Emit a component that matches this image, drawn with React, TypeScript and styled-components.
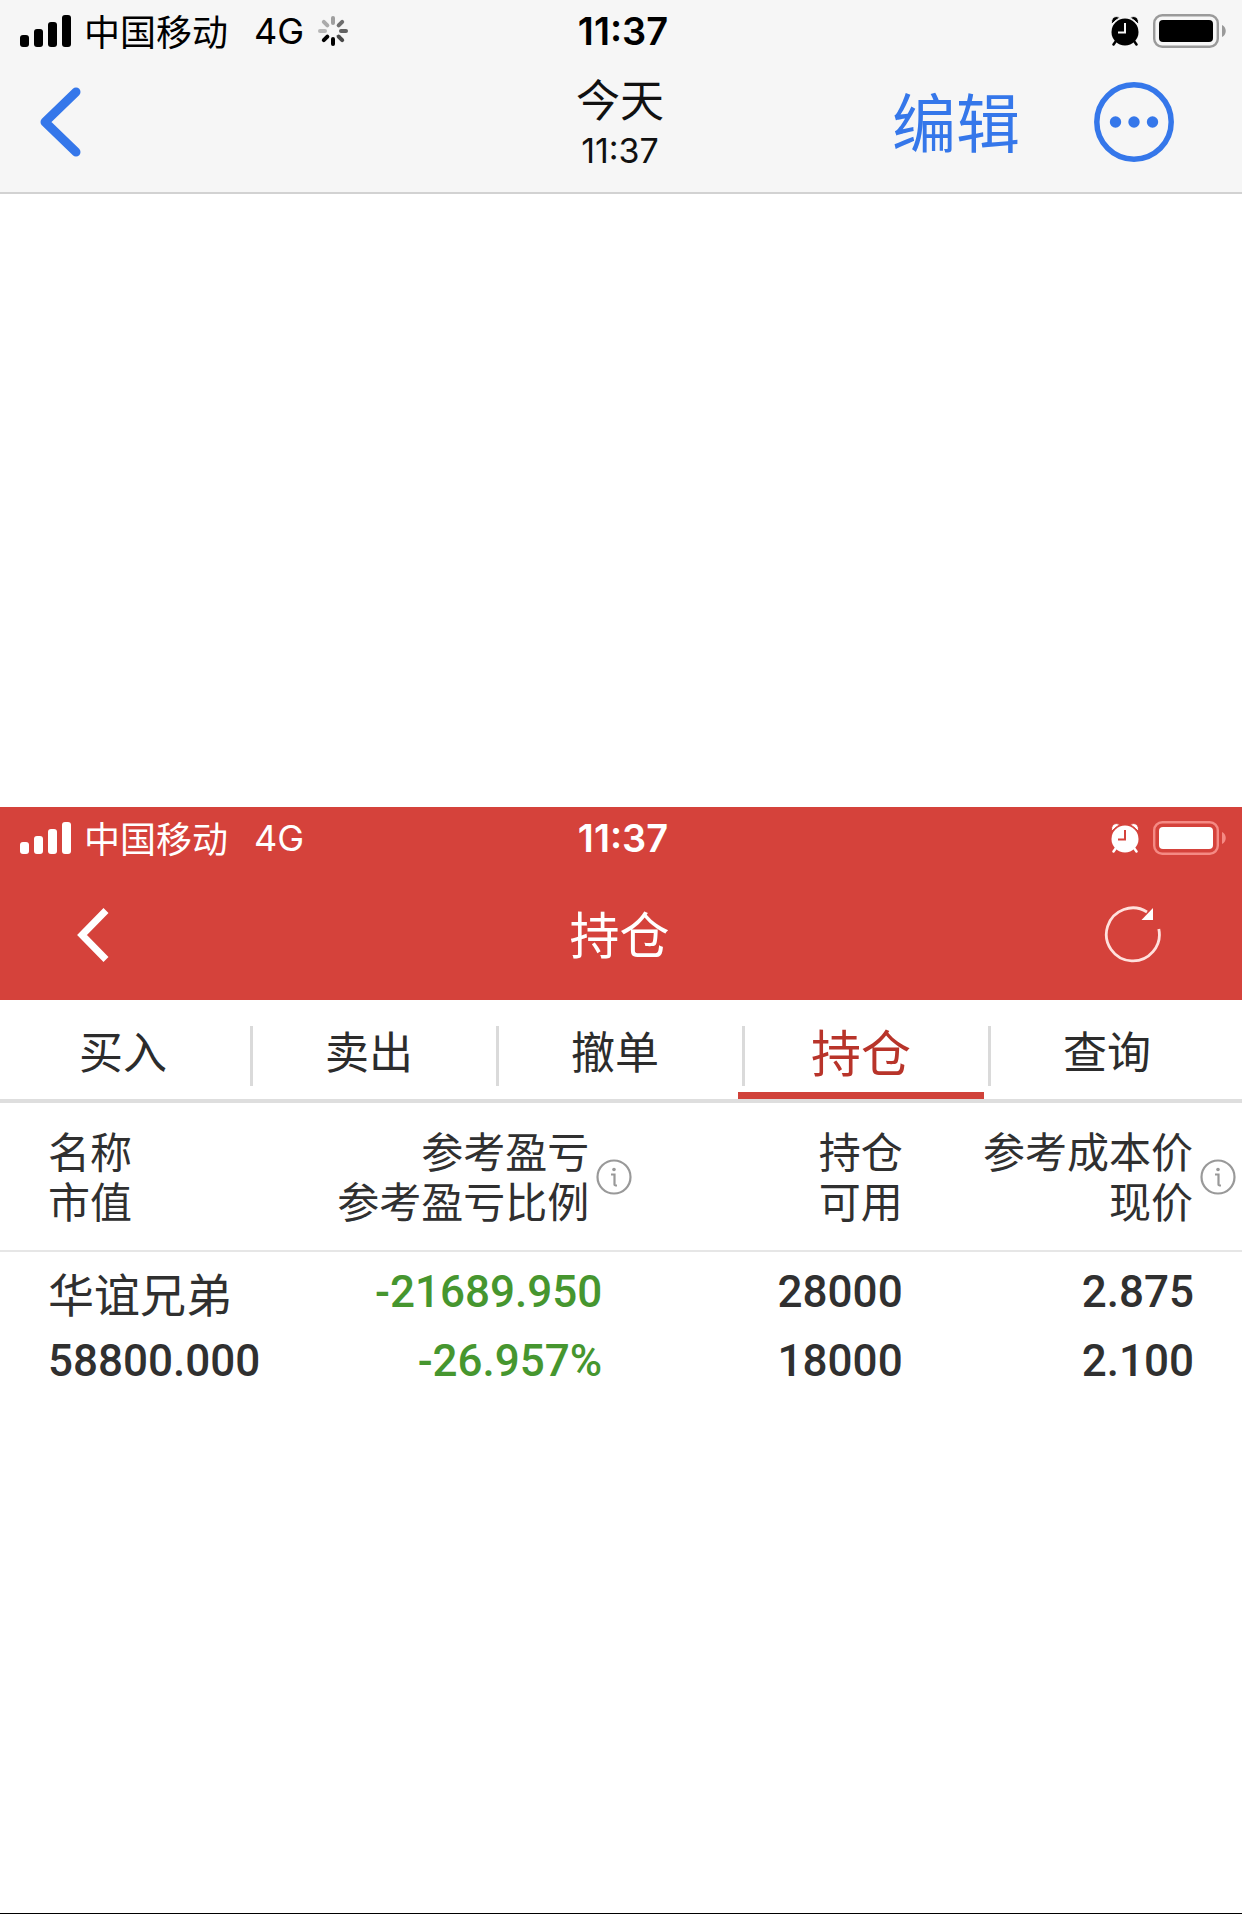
import React from "react";
import styled, { createGlobalStyle } from "styled-components";

const cjk = `"Noto Sans CJK SC", sans-serif`;

const GlobalStyle = createGlobalStyle`
  *, *::before, *::after { box-sizing: border-box; }
  body { margin: 0; background: #fff; font-family: Inter, ${cjk}; }
  button { appearance: none; border: 0; padding: 0; background: none; font: inherit; color: inherit; cursor: pointer; }
  svg { display: block; }
`;

const Page = styled.div`
  display: flex;
  flex-direction: column;
  min-height: 100vh;
  border-bottom: 1px solid #000;
`;

const AlbumHeader = styled.header`
  padding-bottom: 10px;
  background: #f6f6f6;
  border-bottom: 2px solid #d2d2d2;
`;

const StatusRow = styled.div<{ $color: string }>`
  display: grid;
  grid-template-columns: 1fr auto 1fr;
  align-items: center;
  height: 62px;
  padding: 0 16px 0 20px;
  color: ${(p) => p.$color};
  font-size: 36px;
  line-height: 40px;
`;

const Carrier = styled.div`
  display: flex;
  align-items: center;
`;

const CarrierName = styled.span`
  margin-left: 12px;
  padding-bottom: 2px;
  font-family: ${cjk};
`;

const Network = styled.span`
  margin: 0 14px 0 26px;
`;

const Clock = styled.time`
  font-size: 38px;
  font-weight: 600;
`;

const Indicators = styled.div`
  display: flex;
  justify-content: flex-end;
  align-items: center;
  gap: 14px;
`;

const AlbumNav = styled.nav`
  display: grid;
  grid-template-columns: 1fr auto 1fr;
  align-items: center;
  height: 120px;
  padding: 0 68px 0 40px;
`;

const NavButton = styled.button`
  justify-self: start;
  color: #3577ea;
`;

const PhotoDate = styled.div`
  display: flex;
  flex-direction: column;
  align-items: center;
  padding: 8px 0 0 26px;
  color: #111;
  line-height: 52px;
`;

const Day = styled.h1`
  margin: 0;
  font-family: ${cjk};
  font-size: 44px;
  font-weight: 400;
  line-height: 50px;
`;

const Hour = styled.time`
  font-size: 34px;
  line-height: 56px;
`;

const NavActions = styled.div`
  display: flex;
  justify-content: flex-end;
  align-items: center;
  gap: 74px;
`;

const EditButton = styled(NavButton)`
  padding-bottom: 6px;
  font-family: ${cjk};
  font-size: 64px;
  line-height: 80px;
`;

const Photo = styled.main`
  margin-top: 613px;
`;

const BrokerHeader = styled.header`
  background: #d5423b;
  color: #fff;
`;

const BrokerNav = styled.nav`
  display: grid;
  grid-template-columns: 1fr auto 1fr;
  align-items: center;
  height: 131px;
  padding: 0 80px 0 77px;
`;

const BrokerButton = styled.button<{ $end?: boolean }>`
  justify-self: ${(p) => (p.$end ? "end" : "start")};
`;

const BrokerTitle = styled.h2`
  margin: 0;
  padding-bottom: 6px;
  font-family: ${cjk};
  font-size: 50px;
  font-weight: 400;
  line-height: 60px;
`;

const Tabs = styled.div`
  display: grid;
  grid-template-columns: repeat(5, 1fr);
  height: 103px;
  padding-right: 12px;
  border-bottom: 4px solid #dedede;
`;

const Tab = styled.button<{ $active: boolean }>`
  display: flex;
  align-items: center;
  padding-top: 8px;
  border-bottom: 7px solid ${(p) => (p.$active ? "#d0423a" : "transparent")};
  color: ${(p) => (p.$active ? "#b8342a" : "#2c2c2c")};
  font-family: ${cjk};
  font-size: ${(p) => (p.$active ? 50 : 44)}px;
  line-height: 60px;

  &:not(:last-child)::after {
    content: "";
    width: 3px;
    height: 60px;
    margin: 12px -7px 0 4px;
    background: #dadada;
  }
`;

const TabLabel = styled.span`
  flex: 1;
  text-align: center;
`;

const Holdings = styled.table`
  width: 100%;
  border-collapse: collapse;
  table-layout: fixed;
  color: #303030;
`;

const Column = styled.col<{ $width: number }>`
  width: ${(p) => p.$width}%;
`;

const HeadRow = styled.tr`
  border-bottom: 2px solid #e6e6e6;
`;

const HeadCell = styled.th<{ $left?: number; $right?: number }>`
  padding: 22px ${(p) => p.$right ?? 0}px 22px ${(p) => p.$left ?? 0}px;
  font-family: ${cjk};
  font-size: 42px;
  font-weight: 400;
  line-height: 50px;
  white-space: nowrap;
`;

const HeadContent = styled.div<{ $start?: boolean }>`
  display: flex;
  justify-content: ${(p) => (p.$start ? "flex-start" : "flex-end")};
  align-items: center;
  gap: 7px;
  text-align: ${(p) => (p.$start ? "left" : "right")};
`;

const HeadText = styled.div`
  padding-bottom: 3px;
`;

const Line = styled.div``;

const BodyCell = styled.td<{ $left?: number; $right?: number; $loss?: boolean }>`
  padding: 6px ${(p) => p.$right ?? 0}px 0 ${(p) => p.$left ?? 0}px;
  color: ${(p) => (p.$loss ? "#46962f" : "inherit")};
  font-family: Roboto, ${cjk};
  font-size: 44px;
  font-weight: 500;
  line-height: 69px;
  text-align: ${(p) => (p.$left ? "left" : "right")};
  white-space: nowrap;
`;

const StockName = styled.div`
  font-family: ${cjk};
  font-size: 46px;
  font-weight: 400;
`;

const SignalIcon = () => (
  <svg width="52" height="32" viewBox="0 0 52 32" fill="currentColor" aria-hidden="true">
    <rect x="0" y="20" width="9" height="12" rx="3" />
    <rect x="14" y="14" width="9" height="18" rx="3" />
    <rect x="28" y="7" width="9" height="25" rx="3" />
    <rect x="42" y="0" width="9" height="32" rx="3" />
  </svg>
);

const spokes = [0.35, 0.55, 0.6, 0.7, 1, 1, 0.25, 0.3];

const Spinner = () => (
  <svg width="30" height="30" viewBox="-15 -15 30 30" aria-hidden="true">
    {spokes.map((opacity, i) => (
      <line key={i} y1="-13" y2="-8" stroke="#000" strokeWidth="4" strokeLinecap="round"
        opacity={opacity} transform={`rotate(${i * 45})`} />
    ))}
  </svg>
);

const AlarmIcon = ({ hand }: { hand: string }) => (
  <svg width="28" height="30" viewBox="0 0 28 30" aria-hidden="true">
    <circle cx="14" cy="16" r="13.500" fill="currentColor" />
    <g fill="currentColor" stroke={hand} strokeWidth="1">
      <path d="M1 8C-1 3 4-2 9 2C6 3 4 5 1 8Z" />
      <path d="M27 8C29 3 24-2 19 2C22 3 24 5 27 8Z" />
    </g>
    <path d="M5 25L2.500 28.500M23 25L25.500 28.500" stroke="currentColor" strokeWidth="2.500" strokeLinecap="round" />
    <path d="M14 7V16.500H7" fill="none" stroke={hand} strokeWidth="2" />
  </svg>
);

const BatteryIcon = ({ frame }: { frame: string }) => (
  <svg width="73" height="34" viewBox="0 0 73 34" aria-hidden="true">
    <rect x="1.200" y="1.200" width="63.600" height="31.600" rx="8" fill="none" stroke={frame} strokeWidth="2.400" />
    <rect x="6" y="6" width="54" height="22" rx="4" fill="currentColor" />
    <path d="M69 11C74 13 74 21 69 23Z" fill={frame} />
  </svg>
);

const InfoIcon = () => (
  <svg width="36" height="36" viewBox="0 0 36 36" fill="none" stroke="#999" strokeWidth="2.200" aria-hidden="true">
    <circle cx="18" cy="18" r="16.500" />
    <circle cx="18" cy="10.500" r="1.800" fill="#999" stroke="none" />
    <path d="M15 15.500H18.500V25.500Q18.500 26.500 21 26.500" />
  </svg>
);

type StatusProps = { color: string; hand: string; frame: string; busy?: boolean };

const StatusBar = ({ color, hand, frame, busy }: StatusProps) => (
  <StatusRow $color={color}>
    <Carrier>
      <SignalIcon />
      <CarrierName>中国移动</CarrierName>
      <Network>4G</Network>
      {busy && <Spinner />}
    </Carrier>
    <Clock>11:37</Clock>
    <Indicators>
      <AlarmIcon hand={hand} />
      <BatteryIcon frame={frame} />
    </Indicators>
  </StatusRow>
);

const tabs = ["买入", "卖出", "撤单", "持仓", "查询"];

export default function App() {
  const [active, setActive] = React.useState("持仓");

  return (
    <Page>
      <GlobalStyle />
      <AlbumHeader>
        <StatusBar color="#000" hand="#f6f6f6" frame="#9a9a9a" busy />
        <AlbumNav>
          <NavButton aria-label="返回">
            <svg width="41" height="70" viewBox="0 0 41 70" fill="none" stroke="currentColor" strokeWidth="9" strokeLinecap="round" strokeLinejoin="round">
              <path d="M36 5L5 35L36 65" />
            </svg>
          </NavButton>
          <PhotoDate>
            <Day>今天</Day>
            <Hour>11:37</Hour>
          </PhotoDate>
          <NavActions>
            <EditButton>编辑</EditButton>
            <NavButton aria-label="更多">
              <svg width="80" height="80" viewBox="0 0 80 80" fill="currentColor">
                <circle cx="40" cy="40" r="37.200" fill="none" stroke="currentColor" strokeWidth="5.500" />
                <circle cx="21.500" cy="40" r="5.700" />
                <circle cx="40" cy="40" r="5.700" />
                <circle cx="58.500" cy="40" r="5.700" />
              </svg>
            </NavButton>
          </NavActions>
        </AlbumNav>
      </AlbumHeader>

      <Photo>
        <BrokerHeader>
          <StatusBar color="#fff" hand="#d5423b" frame="#f58a84" />
          <BrokerNav>
            <BrokerButton aria-label="返回">
              <svg width="32" height="54" viewBox="0 0 32 54" fill="none" stroke="currentColor" strokeWidth="7">
                <path d="M29 2.500L5 27L29 51.500" />
              </svg>
            </BrokerButton>
            <BrokerTitle>持仓</BrokerTitle>
            <BrokerButton $end aria-label="刷新">
              <svg width="58" height="58" viewBox="0 0 58 58" fill="none" stroke="#ffe1dd" strokeWidth="2.800">
                <path d="M54.800 23A26.500 26.500 0 1 1 43 6" />
                <path d="M49 2V14H37.500Z" fill="#fff" stroke="none" />
              </svg>
            </BrokerButton>
          </BrokerNav>
        </BrokerHeader>

        <Tabs role="tablist">
          {tabs.map((name) => (
            <Tab key={name} role="tab" aria-selected={name === active} $active={name === active} onClick={() => setActive(name)}>
              <TabLabel>{name}</TabLabel>
            </Tab>
          ))}
        </Tabs>

        <Holdings>
          <colgroup>
            <Column $width={25} />
            <Column $width={28} />
            <Column $width={20} />
            <Column $width={27} />
          </colgroup>
          <thead>
            <HeadRow>
              <HeadCell $left={48}>
                <HeadContent $start>
                  <HeadText><Line>名称</Line><Line>市值</Line></HeadText>
                </HeadContent>
              </HeadCell>
              <HeadCell $right={26}>
                <HeadContent>
                  <HeadText><Line>参考盈亏</Line><Line>参考盈亏比例</Line></HeadText>
                  <InfoIcon />
                </HeadContent>
              </HeadCell>
              <HeadCell $right={4}>
                <HeadContent>
                  <HeadText><Line>持仓</Line><Line>可用</Line></HeadText>
                </HeadContent>
              </HeadCell>
              <HeadCell $right={6}>
                <HeadContent>
                  <HeadText><Line>参考成本价</Line><Line>现价</Line></HeadText>
                  <InfoIcon />
                </HeadContent>
              </HeadCell>
            </HeadRow>
          </thead>
          <tbody>
            <tr>
              <BodyCell $left={48}>
                <StockName>华谊兄弟</StockName>
                <Line>58800.000</Line>
              </BodyCell>
              <BodyCell $right={56} $loss>
                <Line>-21689.950</Line>
                <Line>-26.957%</Line>
              </BodyCell>
              <BodyCell $right={4}>
                <Line>28000</Line>
                <Line>18000</Line>
              </BodyCell>
              <BodyCell $right={48}>
                <Line>2.875</Line>
                <Line>2.100</Line>
              </BodyCell>
            </tr>
          </tbody>
        </Holdings>
      </Photo>
    </Page>
  );
}
